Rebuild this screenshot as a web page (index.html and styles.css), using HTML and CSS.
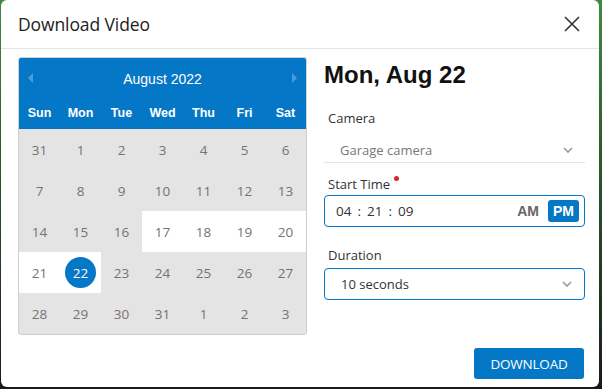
FILE: index.html
```html
<!DOCTYPE html>
<html>
<head>
<meta charset="utf-8">
<link rel="stylesheet" href="styles.css">
</head>
<body>
<div class="dialog">
  <div class="dialog-header">
    <h1 class="dialog-title">Download Video</h1>
    <button class="close-btn" aria-label="Close">
      <svg width="16" height="16" viewBox="0 0 16 16"><path d="M1 1 L15 15 M15 1 L1 15" stroke="#333" stroke-width="1.6" fill="none"/></svg>
    </button>
  </div>
  <div class="dialog-body">
    <div class="calendar">
      <div class="cal-head">
        <div class="cal-month">
          <span class="nav nav-prev"></span>
          <span class="month-label">August 2022</span>
          <span class="nav nav-next"></span>
        </div>
        <div class="cal-weekdays">
          <span>Sun</span><span>Mon</span><span>Tue</span><span>Wed</span><span>Thu</span><span>Fri</span><span>Sat</span>
        </div>
      </div>
      <div class="cal-grid">
        <span class="day">31</span><span class="day">1</span><span class="day">2</span><span class="day">3</span><span class="day">4</span><span class="day">5</span><span class="day">6</span>
        <span class="day">7</span><span class="day">8</span><span class="day">9</span><span class="day">10</span><span class="day">11</span><span class="day">12</span><span class="day">13</span>
        <span class="day">14</span><span class="day">15</span><span class="day">16</span><span class="day avail">17</span><span class="day avail">18</span><span class="day avail">19</span><span class="day avail">20</span>
        <span class="day avail">21</span><span class="day avail"><span class="sel">22</span></span><span class="day">23</span><span class="day">24</span><span class="day">25</span><span class="day">26</span><span class="day">27</span>
        <span class="day">28</span><span class="day">29</span><span class="day">30</span><span class="day">31</span><span class="day">1</span><span class="day">2</span><span class="day">3</span>
      </div>
    </div>
    <div class="form">
      <h2 class="date-title">Mon, Aug 22</h2>
      <label class="field-label">Camera</label>
      <div class="select plain">
        <span class="placeholder">Garage camera</span>
        <svg class="chev" width="10" height="6" viewBox="0 0 10 6"><path d="M1 1 L5 5 L9 1" stroke="#999" stroke-width="1.6" fill="none"/></svg>
      </div>
      <label class="field-label">Start Time<span class="req"></span></label>
      <div class="time-input">
        <span class="time-val">04</span><span class="colon">:</span><span class="time-val">21</span><span class="colon">:</span><span class="time-val">09</span>
        <span class="spacer"></span>
        <span class="ampm">AM</span>
        <span class="ampm active">PM</span>
      </div>
      <label class="field-label">Duration</label>
      <div class="select boxed">
        <span class="value">10 seconds</span>
        <svg class="chev" width="10" height="6" viewBox="0 0 10 6"><path d="M1 1 L5 5 L9 1" stroke="#999" stroke-width="1.6" fill="none"/></svg>
      </div>
    </div>
  </div>
  <div class="dialog-footer">
    <button class="btn-primary">DOWNLOAD</button>
  </div>
</div>
</body>
</html>
```
FILE: styles.css
```css
* { box-sizing: border-box; }
html, body { margin: 0; padding: 0; }
body {
  width: 602px;
  height: 389px;
  background: linear-gradient(to bottom, #3f8a3f 0%, #2d5a2d 40%, #1a1a1a 100%);
  font-family: "Open Sans", "Noto Sans", sans-serif;
  overflow: hidden;
}
.dialog {
  margin: 0 3px 0 1px;
  height: 387px;
  background: #fff;
  border-radius: 6px;
  display: flex;
  flex-direction: column;
}
.dialog-header {
  height: 49px;
  border-bottom: 1px solid #e5e5e5;
  display: flex;
  align-items: center;
  padding: 0 19px 0 17px;
}
.dialog-title {
  margin: 0;
  flex: 1;
  font-weight: 400;
  font-size: 17.5px;
  color: #222;
  letter-spacing: -0.1px;
}
.close-btn {
  border: 0;
  background: none;
  padding: 0;
  width: 16px;
  height: 16px;
  display: flex;
}
.dialog-body {
  display: flex;
  padding: 8px 0 0 17px;
  gap: 17px;
}
.calendar {
  width: 289px;
  border: 1px solid #cfcfcf;
  border-radius: 3px;
  overflow: hidden;
  background: #e4e4e4;
  font-family: "Liberation Sans", Arial, sans-serif;
}
.cal-head { background: #0477c6; color: #fff; }
.cal-month {
  height: 40px;
  display: flex;
  align-items: center;
  justify-content: space-between;
  padding: 0 9px;
}
.month-label { font-size: 14px; padding-top: 1px; }
.nav { width: 0; height: 0; border-top: 5px solid transparent; border-bottom: 5px solid transparent; }
.nav-prev { border-right: 5px solid #4b9bd6; }
.nav-next { border-left: 5px solid #4b9bd6; }
.cal-weekdays {
  height: 31px;
  display: grid;
  grid-template-columns: repeat(7, 1fr);
  align-items: center;
  text-align: center;
  font-weight: 700;
  font-size: 12.5px;
  padding-bottom: 2px;
}
.cal-grid {
  display: grid;
  grid-template-columns: repeat(7, 1fr);
  grid-auto-rows: 41px;
}
.day {
  display: flex;
  align-items: center;
  justify-content: center;
  font-family: "Open Sans", "Noto Sans", sans-serif;
  font-size: 13.5px;
  color: #767270;
}
.day.avail { background: #fff; }
.sel {
  width: 31px;
  height: 31px;
  border-radius: 50%;
  background: #0477c6;
  color: #fff;
  display: flex;
  align-items: center;
  justify-content: center;
}
.form {
  width: 261px;
  display: flex;
  flex-direction: column;
}
.date-title {
  margin: 3px 0 0 0;
  font-family: "Liberation Sans", Arial, sans-serif;
  font-weight: 700;
  font-size: 24px;
  color: #111;
  line-height: 30px;
}
.field-label {
  font-size: 13px;
  color: #333;
  margin: 19px 0 0 4px;
  line-height: 18px;
}
.req {
  display: inline-block;
  width: 5px;
  height: 5px;
  border-radius: 50%;
  background: #d9262c;
  margin-left: 4px;
  vertical-align: 8px;
}
.select {
  display: flex;
  align-items: center;
  justify-content: space-between;
  font-size: 13px;
  padding: 0 12px 0 16px;
}
.select.plain {
  height: 26px;
  margin-top: 10px;
  border-bottom: 1px solid #e4e4e4;
}
.select.plain + .field-label { margin-top: 12px; }
.placeholder { color: #777; }
.select.boxed {
  height: 32px;
  margin-top: 4px;
  border: 1px solid #0477c6;
  border-radius: 4px;
  color: #333;
}
.time-input {
  margin-top: 2px;
  height: 32px;
  border: 1px solid #0477c6;
  border-radius: 4px;
  display: flex;
  align-items: center;
  padding: 0 5px 0 11px;
  font-size: 13.5px;
  color: #333;
}
.colon { margin: 0 6px; }
.spacer { flex: 1; }
.ampm {
  font-weight: 700;
  font-size: 14px;
  color: #666;
  padding: 2px 5px;
  border-radius: 3px;
  margin-left: 4px;
  font-family: "Liberation Sans", Arial, sans-serif;
}
.ampm.active { background: #0477c6; color: #fff; padding: 3px 5px; }
.time-input + .field-label { margin-top: 19px; }
.dialog-footer {
  margin-top: auto;
  display: flex;
  justify-content: flex-end;
  padding: 0 15px 8px 0;
}
.btn-primary {
  background: #0477c6;
  color: #fff;
  border: 0;
  border-radius: 3px;
  height: 31px;
  width: 110px;
  font-family: "Open Sans", "Noto Sans", sans-serif;
  font-size: 13.5px;
  letter-spacing: -0.2px;
}
```
